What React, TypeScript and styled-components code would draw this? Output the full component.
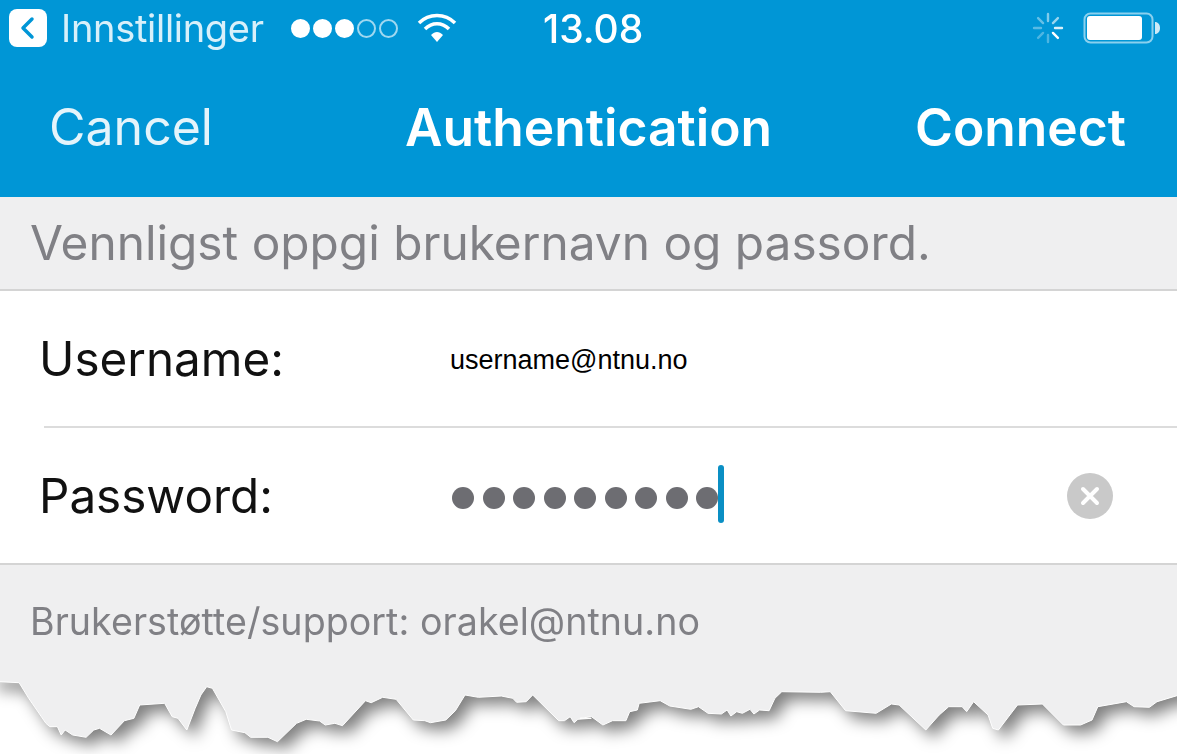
import React from "react";
import styled, { createGlobalStyle } from "styled-components";

const GlobalStyle = createGlobalStyle`
  html, body {
    margin: 0;
    padding: 0;
    background: #fff;
  }
  body {
    font-family: Inter, "Liberation Sans", sans-serif;
    overflow: hidden;
  }
`;

const Screen = styled.div`
  width: 1177px;
  height: 754px;
  display: flex;
  flex-direction: column;
  overflow: hidden;
`;

const Header = styled.header`
  height: 197px;
  background-color: #0096d6;
  color: #fff;
  display: flex;
  flex-direction: column;
`;

const StatusBar = styled.div`
  height: 56px;
  display: flex;
  align-items: center;
  padding-left: 9px;
  filter: blur(0.6px);
`;

const BackBadge = styled.div`
  width: 38px;
  height: 38px;
  border-radius: 8px;
  background-color: #fff;
  display: flex;
  align-items: center;
  justify-content: center;
`;

const Carrier = styled.span`
  font-size: 38px;
  letter-spacing: -0.3px;
  margin-left: 14px;
  color: #d8f0fa;
  width: 230px;
`;

const Signal = styled.div`
  display: flex;
  align-items: center;
  gap: 3px;
  width: 126px;
`;

const SignalDot = styled.span<{ $on: boolean }>`
  width: 19px;
  height: 19px;
  box-sizing: border-box;
  border-radius: 50%;
  border: 2px solid ${(p) => (p.$on ? "#fff" : "#9fd8f0")};
  background-color: ${(p) => (p.$on ? "#fff" : "transparent")};
`;

const Clock = styled.span`
  font-size: 39px;
  font-weight: 500;
  margin-left: 86px;
  width: 488px;
`;

const Spinner = styled.svg`
  width: 34px;
  height: 34px;
`;

const Battery = styled.svg`
  width: 80px;
  height: 32px;
  margin-left: 18px;
`;

const NavBar = styled.nav`
  flex: 1;
  display: grid;
  grid-template-columns: 356px 510px 1fr;
  align-items: center;
  padding: 0 0 0 49px;
  filter: blur(0.5px);
`;

const NavAction = styled.span<{ $bold?: boolean }>`
  font-size: ${(p) => (p.$bold ? 51.5 : 50)}px;
  font-weight: ${(p) => (p.$bold ? 600 : 400)};
  color: ${(p) => (p.$bold ? "#fff" : "#e4f4fb")};
`;

const Hint = styled.div`
  height: 94px;
  box-sizing: border-box;
  padding-left: 30px;
  display: flex;
  align-items: center;
  background-color: #efeff0;
  color: #808085;
  font-size: 47.8px;
  filter: blur(0.4px);
  border-bottom: 2px solid #d4d4d4;
`;

const Form = styled.section`
  background-color: #fff;
  border-bottom: 2px solid #d4d4d4;
`;

const Row = styled.div`
  height: 135px;
  padding-left: 40px;
  display: grid;
  grid-template-columns: 410px 1fr 110px;
  align-items: center;
`;

const Divider = styled.hr`
  height: 2px;
  margin: 0 0 0 44px;
  border: none;
  background-color: #dcdcdc;
`;

const FieldLabel = styled.label`
  color: #111;
  font-size: 47.6px;
  margin-left: -1px;
  filter: blur(0.4px);
`;

const FieldValue = styled.span`
  font-family: "Liberation Sans", Arial, sans-serif;
  font-size: 27px;
  margin-top: 4px;
  color: #000;
`;

const Secret = styled.div`
  display: flex;
  align-items: center;
  gap: 8.5px;
  padding-left: 2px;
  filter: blur(0.5px);
`;

const SecretDot = styled.span`
  width: 22px;
  height: 22px;
  margin-top: 4px;
  border-radius: 50%;
  background-color: #6d6d72;
`;

const Cursor = styled.span`
  width: 6px;
  height: 58px;
  margin: 0 0 4px -9px;
  border-radius: 3px;
  background-color: #0a8fc4;
`;

const ClearButton = styled.div`
  width: 46px;
  height: 46px;
  border-radius: 50%;
  background-color: #c9c9c9;
  display: flex;
  align-items: center;
  justify-content: center;
  filter: blur(0.5px);
`;

const Footer = styled.footer`
  height: 115px;
  box-sizing: border-box;
  padding: 36px 0 0 30px;
  background-color: #efeff0;
  color: #808085;
  font-size: 37.6px;
  line-height: 42px;
  letter-spacing: 0.05px;
  flex-shrink: 0;
  filter: blur(0.4px);
`;

const TornEdge = styled.svg`
  display: block;
  width: 1177px;
  height: 74px;
  flex-shrink: 0;
`;

// traced from the torn paper edge, [x, y] in page pixels before the offset below
const leftEdge = [
  [0, 65], [50, 68], [75, 115], [120, 190], [130, 200], [150, 200], [160, 225], [170, 210], [190, 225],
  [225, 232], [245, 210], [260, 205], [290, 225], [325, 182], [350, 175], [365, 135], [430, 130], [450, 170],
  [465, 175], [488, 210], [510, 145], [525, 105], [540, 80], [555, 85], [590, 155], [605, 210], [640, 218],
  [655, 232], [700, 232], [725, 245], [775, 190], [800, 178], [835, 183], [850, 195], [875, 190], [895, 197],
  [955, 122], [970, 128], [1000, 112], [1035, 118], [1080, 180], [1110, 182], [1125, 188], [1165, 180],
  [1190, 152], [1215, 105], [1250, 112], [1310, 108], [1340, 115], [1350, 127], [1375, 125], [1392, 105],
  [1460, 182], [1475, 182], [1490, 170], [1500, 188], [1510, 178], [1545, 175],
].map(([x, y]) => [x / 2.613, y / 3 - 20]);

const rightEdge = [
  [0, 175], [30, 170], [60, 195], [85, 182], [120, 182], [130, 155], [150, 150], [155, 130], [210, 122],
  [235, 138], [290, 148], [310, 140], [335, 160], [370, 162], [385, 150], [395, 168], [410, 155], [425, 160],
  [445, 148], [455, 162], [470, 150], [495, 152], [510, 115], [528, 95], [630, 97], [655, 95], [695, 152],
  [775, 160], [815, 132], [835, 135], [905, 210], [940, 165], [965, 140], [1000, 140], [1012, 155], [1030, 125],
  [1068, 165], [1080, 205], [1095, 210], [1145, 135], [1210, 132], [1265, 195], [1310, 195], [1340, 180],
  [1355, 140], [1430, 125], [1450, 140], [1490, 142], [1510, 125], [1568, 105],
].map(([x, y]) => [x / 2.617 + 580, y / 3 - 20]);

const edge = [...leftEdge, ...rightEdge].map(([x, y]) => `${x.toFixed(1)},${y.toFixed(1)}`).join(" ");
const sheet = `-10,-10 -10,1.700 ${edge} 1187,15 1187,-10`;

const spinnerSpokes = [0, 45, 90, 135, 180, 225, 270, 315];

function StatusIcons() {
  return (
    <>
      <Spinner viewBox="0 0 34 34">
        {spinnerSpokes.map((angle, i) => (
          <line
            key={angle}
            x1="17"
            y1="3"
            x2="17"
            y2="10"
            stroke="#fff"
            strokeWidth="2.4"
            strokeLinecap="round"
            opacity={[0.5, 0.6, 0.85, 1, 0.3, 0.3, 0.35, 0.4][i]}
            transform={`rotate(${angle} 17 17)`}
          />
        ))}
      </Spinner>
      <Battery viewBox="0 0 80 32">
        <rect x="1.5" y="1.5" width="68" height="29" rx="6" fill="none" stroke="#8ad0ee" strokeWidth="2" />
        <rect x="4" y="4" width="55" height="24" rx="3" fill="#fff" />
        <path d="M72 10c3 0 5 2.500 5 6s-2 6-5 6z" fill="#cdeaf7" />
      </Battery>
    </>
  );
}

export default function App() {
  return (
    <>
      <GlobalStyle />
      <Screen>
        <Header>
          <StatusBar>
            <BackBadge>
              <svg width="38" height="38" viewBox="0 0 38 38">
                <path d="M23 10 L14 19 L23 28" fill="none" stroke="#0096d6" strokeWidth="3.500" strokeLinecap="round" strokeLinejoin="round" />
              </svg>
            </BackBadge>
            <Carrier>Innstillinger</Carrier>
            <Signal>
              {[true, true, true, false, false].map((on, i) => (
                <SignalDot key={i} $on={on} />
              ))}
            </Signal>
            <svg width="40" height="32" viewBox="0 0 40 32">
              <path d="M2 11 C12 1 28 1 38 11" fill="none" stroke="#fff" strokeWidth="3.500" />
              <path d="M8 17 C15 10 25 10 32 17" fill="none" stroke="#fff" strokeWidth="3.500" />
              <path d="M14 23 C18 19 22 19 26 23 L20 30 Z" fill="#fff" />
            </svg>
            <Clock>13.08</Clock>
            <StatusIcons />
          </StatusBar>
          <NavBar>
            <NavAction>Cancel</NavAction>
            <NavAction $bold>Authentication</NavAction>
            <NavAction $bold>Connect</NavAction>
          </NavBar>
        </Header>
        <Hint>Vennligst oppgi brukernavn og passord.</Hint>
        <Form>
          <Row>
            <FieldLabel>Username:</FieldLabel>
            <FieldValue>username@ntnu.no</FieldValue>
          </Row>
          <Divider />
          <Row>
            <FieldLabel>Password:</FieldLabel>
            <Secret>
              {Array.from({ length: 9 }, (_, i) => (
                <SecretDot key={i} />
              ))}
              <Cursor />
            </Secret>
            <ClearButton>
              <svg width="24" height="24" viewBox="0 0 24 24">
                <path d="M5 5 L19 19 M19 5 L5 19" stroke="#fff" strokeWidth="4" strokeLinecap="round" />
              </svg>
            </ClearButton>
          </Row>
        </Form>
        <Footer>Brukerstøtte/support: orakel@ntnu.no</Footer>
        <TornEdge viewBox="0 0 1177 74">
          <defs>
            <filter id="tear-shadow" filterUnits="userSpaceOnUse" x="-40" y="-40" width="1260" height="140" colorInterpolationFilters="sRGB">
              <feGaussianBlur stdDeviation="8" />
            </filter>
          </defs>
          <polygon points={sheet} fill="#000" fillOpacity="0.5" filter="url(#tear-shadow)" transform="translate(8 8)" />
          <polygon points={sheet} fill="#efeff0" stroke="#fff" strokeWidth="1" />
        </TornEdge>
      </Screen>
    </>
  );
}
